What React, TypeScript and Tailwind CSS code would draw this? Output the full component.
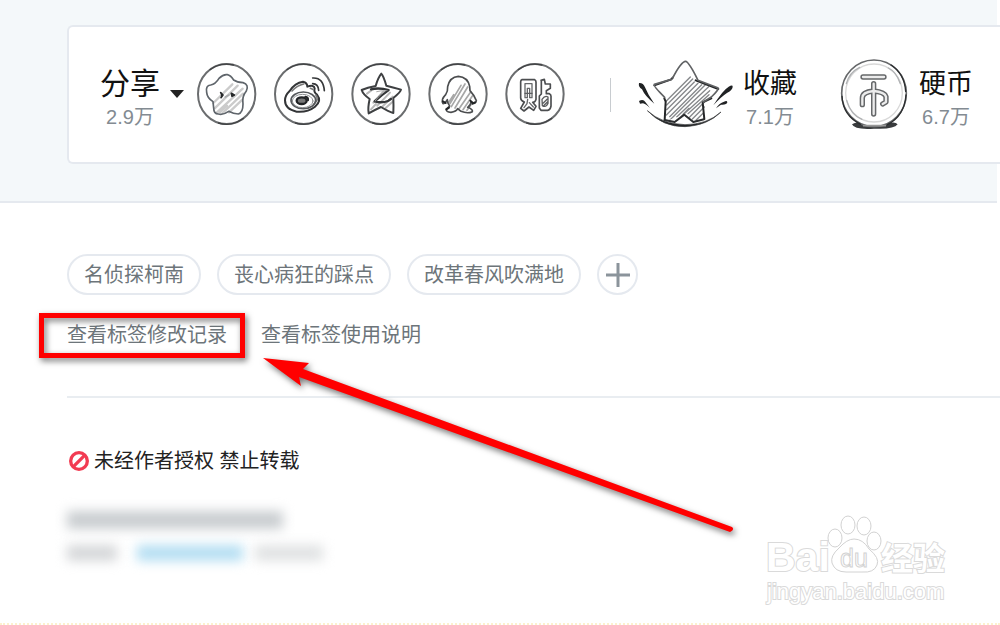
import type { ReactNode } from 'react';

interface StatProps {
  label: string;
  count: string;
  large?: boolean;
}

function Stat({ label, count, large }: StatProps) {
  return (
    <span className="flex flex-col items-center whitespace-nowrap">
      <span className={large ? 'text-[30px] leading-9 text-[#111]' : 'text-[27px] leading-9 text-[#111]'}>{label}</span>
      <span className="text-[20px] leading-[30px] text-[#838b92]">{count}</span>
    </span>
  );
}

interface ShareIconProps {
  label: string;
  viewBox: string;
  cx: number;
  children: ReactNode;
}

function ShareIcon({ label, viewBox, cx, children }: ShareIconProps) {
  return (
    <button type="button" aria-label={label} className="shrink-0">
      <svg viewBox={viewBox} className="block h-[62px] w-[60px]" fill="none" stroke="#55585b" strokeWidth="5" strokeLinecap="round" strokeLinejoin="round">
        <ellipse cx={cx} cy="128" rx="86" ry="90" stroke="#6b6d6f" strokeWidth="6" />
        <path d={`M${cx - 50} 55a86 90 0 0 1 70-14M${cx + 50} 201a86 90 0 0 1-75 14`} stroke="#404244" strokeWidth="4" />
        {children}
      </svg>
    </button>
  );
}

function DynamicIcon() {
  return (
    <ShareIcon label="动态" viewBox="20 35 180 186" cx={109}>
      <path d="M69 155L126 99M73 171L142 103M80 183L157 112M97 185L158 127M116 183L156 145M88 183L110 163" stroke="#cbcbcb" strokeWidth="7" />
      <path d="M86 81Q99 68 111 70Q121 72 130 86Q140 93 158 94Q177 100 168 119Q154 136 158 158Q158 184 144 188Q130 188 115 180Q98 192 84 188Q70 188 70 170L68 151Q50 139 49 123Q45 103 61 101Q76 98 86 81Z" stroke="#5f656b" />
      <path d="M91 124L98 131L92 139" fill="#26282a" stroke="#26282a" strokeWidth="5" />
      <path d="M123 126L132 131L125 135Z" fill="#26282a" stroke="#26282a" strokeWidth="5" />
      <path d="M105 137L116 131" stroke="#a6a8aa" />
    </ShareIcon>
  );
}

function WeiboIcon() {
  return (
    <ShareIcon label="微博" viewBox="254 35 180 186" cx={343}>
      <path d="M301 119Q317 94 341 91Q354 94 354 106Q374 99 376 111Q372 122 383 130Q398 149 377 166Q354 184 322 181Q287 174 287 147Q287 132 301 119Z" stroke="#333537" strokeWidth="6" />
      <path d="M308 119Q324 102 343 98M363 111l7 3M380 132Q390 145 373 159" stroke="#777" />
      <ellipse cx="342" cy="147" rx="37" ry="25" />
      <ellipse cx="340" cy="149" rx="31" ry="20" stroke="#8d8f91" strokeWidth="3" />
      <ellipse cx="337" cy="148" rx="15" ry="10" fill="#777" stroke="#222426" strokeWidth="7" />
      <path d="M348 136Q358 138 356 147" stroke="#222426" strokeWidth="6" />
      <path d="M370 80Q402 78 405 118M370 97Q387 98 388 117" stroke="#36383a" />
    </ShareIcon>
  );
}

function QzoneIcon() {
  return (
    <ShareIcon label="QQ空间" viewBox="34 35 180 186" cx={124}>
      <path d="M82 127l13-10M101 154l30-34M113 163l38-39M129 165l30-29M94 174l15-16M137 171l22-20" stroke="#b8b8b8" strokeWidth="6" />
      <path d="M125 67Q131 72 140 103Q158 107 184 115Q183 122 161 140Q162 166 161 185Q147 181 124 167Q103 177 87 186Q84 169 90 143Q70 129 66 116Q83 108 108 104Q115 79 125 67Z" stroke="#3e4042" strokeWidth="6" />
      <path d="M94 114Q118 108 147 116Q124 132 105 150Q126 156 145 149M148 147l6-4" stroke="#333537" strokeWidth="7" />
      <path d="M111 121Q124 117 137 119Q112 138 107 149" stroke="#aaa" strokeWidth="3" />
    </ShareIcon>
  );
}

function QQIcon() {
  return (
    <ShareIcon label="QQ" viewBox="264 35 180 186" cx={354}>
      <path d="M330 157L363 102M334 166L375 98M345 170L383 107M356 174L392 122M369 175L397 134M381 177L398 153M325 155L341 130" stroke="#a7a7a7" strokeWidth="5" />
      <path d="M322 145Q315 157 309 157Q302 145 317 130Q324 119 323 106Q329 77 355 75Q383 77 389 105L390 118Q403 132 409 148Q406 158 400 156L393 151Q393 161 383 168Q399 174 397 181Q383 188 363 180L353 172Q349 181 333 183Q317 182 319 173L329 164Q322 156 322 145Z" stroke="#4b4d4f" />
      <path d="M309 150l8 5M319 174l8-5M391 148l6 6M398 157l7-4" stroke="#222426" strokeWidth="6" />
    </ShareIcon>
  );
}

function TiebaIcon() {
  return (
    <ShareIcon label="贴吧" viewBox="44 35 180 186" cx={134}>
      <path d="M95 85h38q4 2 4 7v52q-2 9-10 9l10 12-7 12-14-10-15 12-10-8 11-19q-11-4-11-12V91q0-5 4-6Z" stroke="#4c4e50" strokeWidth="5" />
      <path d="M104 97h21v42h-7v-28h-7v28h-7ZM112 144l-2 13-9 12M117 154l12 13" stroke="#66686a" strokeWidth="4" />
      <path d="M152 87l10-3 3 14h15v13l-12 7v9h9q5 2 5 8v29q-2 12-10 13h-20l-5-7v-36l6-6V87Z" stroke="#4c4e50" strokeWidth="5" />
      <path d="M155 144q9-13 18-7v19q-7 14-17 7ZM159 155l12-12M159 164l13-13M104 126h21" stroke="#5b5d5f" strokeWidth="4" />
    </ShareIcon>
  );
}

function FavoriteIcon() {
  return (
    <svg viewBox="24 25 291 210" className="block h-[70px] w-[97px] shrink-0" fill="none" strokeLinecap="round" strokeLinejoin="round" aria-hidden="true">
      <path d="M109 151L181 79M110 163L188 85M110 177L193 94M109 193L204 98M119 198L215 102M120 208L226 102M140 199L236 108M151 200L239 120M174 189L237 132M177 201L226 151M187 205L223 169M198 209L220 187M160 190l17-17" stroke="#85878a" strokeWidth="4" />
      <path d="M73 104L124 86L128 81M103 143L107 153L104 208M197 89L265 115M244 143L218 155L223 205" stroke="#242628" strokeWidth="6" />
      <path d="M128 82Q153 33 167 32Q178 36 204 89L263 111Q269 116 244 139L220 154M124 86L73 101Q69 106 104 140" stroke="#606264" strokeWidth="5" />
      <path d="M53 181Q99 229 165 228Q232 225 273 184Q230 222 165 222Q96 220 53 181Z" fill="#242628" stroke="#36383a" strokeWidth="2" />
      <path d="M108 211L163 192L189 211Q163 220 134 214Z" fill="#fff" />
      <path d="M104 208L134 214L163 192L190 214L222 206" stroke="#2c2e30" strokeWidth="6" />
      <path d="M27 97Q40 96 45 110Q55 135 73 159Q45 137 36 116Q24 109 27 97Z" fill="#202224" />
      <path d="M27 151Q40 144 46 154L60 172Q46 159 39 158L30 159Z" fill="#202224" />
      <path d="M308 109Q309 101 296 108Q278 119 250 164Q272 139 292 126Q307 119 308 109Z" fill="#202224" />
      <path d="M292 155Q291 148 282 153Q268 157 258 173L273 162Q291 163 292 155Z" fill="#202224" />
    </svg>
  );
}

function CoinIcon() {
  return (
    <svg viewBox="54 25 210 213" className="block h-[71px] w-[70px] shrink-0" fill="none" strokeLinecap="round" strokeLinejoin="round" aria-hidden="true">
      <path d="M96 221Q111 211 132 220H201Q224 211 233 221Q222 237 162 234Q103 238 96 221Z" fill="#393b3d" />
      <ellipse cx="162" cy="128" rx="97" ry="100" fill="#fff" stroke="#66686a" strokeWidth="5" />
      <ellipse cx="162" cy="127" rx="85" ry="87" stroke="#d8d8d8" strokeWidth="4" />
      <path d="M66 137Q69 196 122 221M213 43Q253 68 257 122M202 222Q253 197 258 133" stroke="#2b2d2f" strokeWidth="4" />
      <path d="M79 99Q88 65 119 50M80 149Q92 193 126 206M241 99Q228 62 205 52" stroke="#b0b2b4" strokeWidth="4" />
      <path d="M129 79H192M127 162V142Q127 124 161 121Q194 124 198 138V154L188 160M161 99V190" stroke="#66686a" strokeWidth="16" />
      <path d="M129 79H192M127 162V142Q127 124 161 121Q194 124 198 138V154L188 160M161 99V190" stroke="#ececec" strokeWidth="7" />
      <path d="M131 225h65" stroke="#999" strokeWidth="5" />
    </svg>
  );
}

function ShareBar() {
  return (
    <section className="-mr-[3px] flex h-[139px] items-start overflow-hidden rounded-l-md border-2 border-r-0 border-[#e5e9ef] bg-white pt-8 pl-[31px]">
      <button type="button" className="mt-[7px] flex shrink-0 items-start gap-[9px]">
        <Stat label="分享" count="2.9万" large />
        <svg viewBox="0 0 16 8" className="mt-6 h-2 w-4" aria-hidden="true">
          <path d="M1 0H15L8 8Z" fill="#222" />
        </svg>
      </button>
      <div className="mt-1 ml-3 flex shrink-0 gap-[17px]">
        <DynamicIcon />
        <WeiboIcon />
        <QzoneIcon />
        <QQIcon />
        <TiebaIcon />
      </div>
      <div className="mt-[19px] ml-[45px] h-[34px] w-px shrink-0 bg-[#c8ccd0]" />
      <button type="button" className="ml-[27px] flex shrink-0 items-start gap-2">
        <FavoriteIcon />
        <span className="mt-[7px]"><Stat label="收藏" count="7.1万" /></span>
      </button>
      <button type="button" className="ml-[41px] flex shrink-0 items-start gap-[11px]">
        <CoinIcon />
        <span className="mt-[7px]"><Stat label="硬币" count="6.7万" /></span>
      </button>
    </section>
  );
}

const tags = ['名侦探柯南', '丧心病狂的踩点', '改革春风吹满地'];

function Tags() {
  return (
    <ul className="flex gap-4">
      {tags.map(tag => (
        <li key={tag}>
          <a href="#" className="flex h-[41px] items-center rounded-full border-2 border-[#e5e9ef] px-[15px] text-[20px] leading-6 whitespace-nowrap text-[#6d757a]">
            {tag}
          </a>
        </li>
      ))}
      <li>
        <button type="button" aria-label="添加标签" className="flex size-[41px] items-center justify-center rounded-full border-2 border-[#e5e9ef]">
          <svg viewBox="0 0 24 24" className="size-6" stroke="#8b949b" strokeWidth="3" aria-hidden="true">
            <path d="M12 0V24M0 12H24" />
          </svg>
        </button>
      </li>
    </ul>
  );
}

function Arrow() {
  return (
    <svg viewBox="0 0 480 190" className="pointer-events-none absolute top-[150px] left-[260px] h-[190px] w-[480px] drop-shadow-[2px_3px_3px_rgba(0,0,0,0.55)]" aria-hidden="true">
      <path d="M3 5L49 10L43 16L472 174Q475 177 470 179L39 24L41 33Z" fill="#f00" />
    </svg>
  );
}

function Watermark() {
  return (
    <svg viewBox="0 0 190 97" className="pointer-events-none absolute right-[47px] bottom-4 h-[97px] w-[190px] font-['Liberation_Sans','Noto_Sans_CJK_SC',sans-serif]" fill="#fff" stroke="#dadada" strokeWidth="2" role="img" aria-label="Baidu 经验">
      <g paintOrder="stroke" fontWeight="700">
        <text x="3" y="61" fontSize="41">Bai</text>
        <text x="118" y="60" fontSize="32">经验</text>
      </g>
      <g stroke="#d2d2d2" strokeWidth="1">
        <ellipse cx="72" cy="28" rx="7" ry="9" />
        <ellipse cx="85" cy="15" rx="7" ry="9" />
        <ellipse cx="101" cy="16" rx="7" ry="9" />
        <ellipse cx="111" cy="31" rx="7" ry="9" />
        <path d="M76 38Q84 29 91 29Q100 29 106 39Q117 48 114 55Q111 63 99 62H83Q72 62 69 53Q67 46 76 38Z" />
        <text x="77" y="57" fontSize="25">du</text>
      </g>
      <text x="4" y="89" fontSize="22" paintOrder="stroke">jingyan.baidu.com</text>
    </svg>
  );
}

export default function App() {
  return (
    <div className="flex min-h-screen flex-col overflow-hidden border-b-2 border-dotted border-[#fdf0cd] bg-white font-['Liberation_Sans','Noto_Sans_CJK_SC',sans-serif]">
      <header className="mr-[3px] border-b-2 border-[#e5e9ef] bg-[#f4f8fa] pt-[25px] pb-[37px] pl-[67px]">
        <ShareBar />
      </header>

      <main className="relative grow pt-[51px] pl-[67px]">
        <Tags />
        <nav className="mt-[26px] flex gap-[34px] text-[20px] leading-7 text-[#6d757a]">
          <a href="#" className="relative whitespace-nowrap">
            查看标签修改记录
            <span className="absolute -top-2 right-[-18px] -bottom-[9px] -left-7 border-5 border-[#f00] drop-shadow-[2px_3px_3px_rgba(0,0,0,0.55)]" />
          </a>
          <a href="#" className="whitespace-nowrap">查看标签使用说明</a>
        </nav>
        <hr className="mt-[47px] border-t-2 border-[#e9edf1]" />

        <p className="mt-[49px] flex items-center gap-[5px] text-[20px] leading-7 whitespace-nowrap text-[#222]">
          <svg viewBox="0 0 24 24" className="ml-0.5 size-5" fill="none" stroke="#f23b52" strokeWidth="4" aria-hidden="true">
            <circle cx="12" cy="12" r="10" />
            <path d="M5 19L19 5" />
          </svg>
          未经作者授权 禁止转载
        </p>

        <div className="mt-9 flex flex-col gap-4" aria-hidden="true">
          <div className="h-[18px] w-[216px] bg-[#c9cdd0] blur-[6px]" />
          <div className="flex h-4">
            <div className="w-[50px] bg-[#d5d7d9] blur-[6px]" />
            <div className="ml-5 w-[106px] bg-[#b4def2] blur-[6px]" />
            <div className="ml-3 w-[68px] bg-[#e0e2e3] blur-[6px]" />
          </div>
        </div>

        <Arrow />
        <Watermark />
      </main>
    </div>
  );
}
